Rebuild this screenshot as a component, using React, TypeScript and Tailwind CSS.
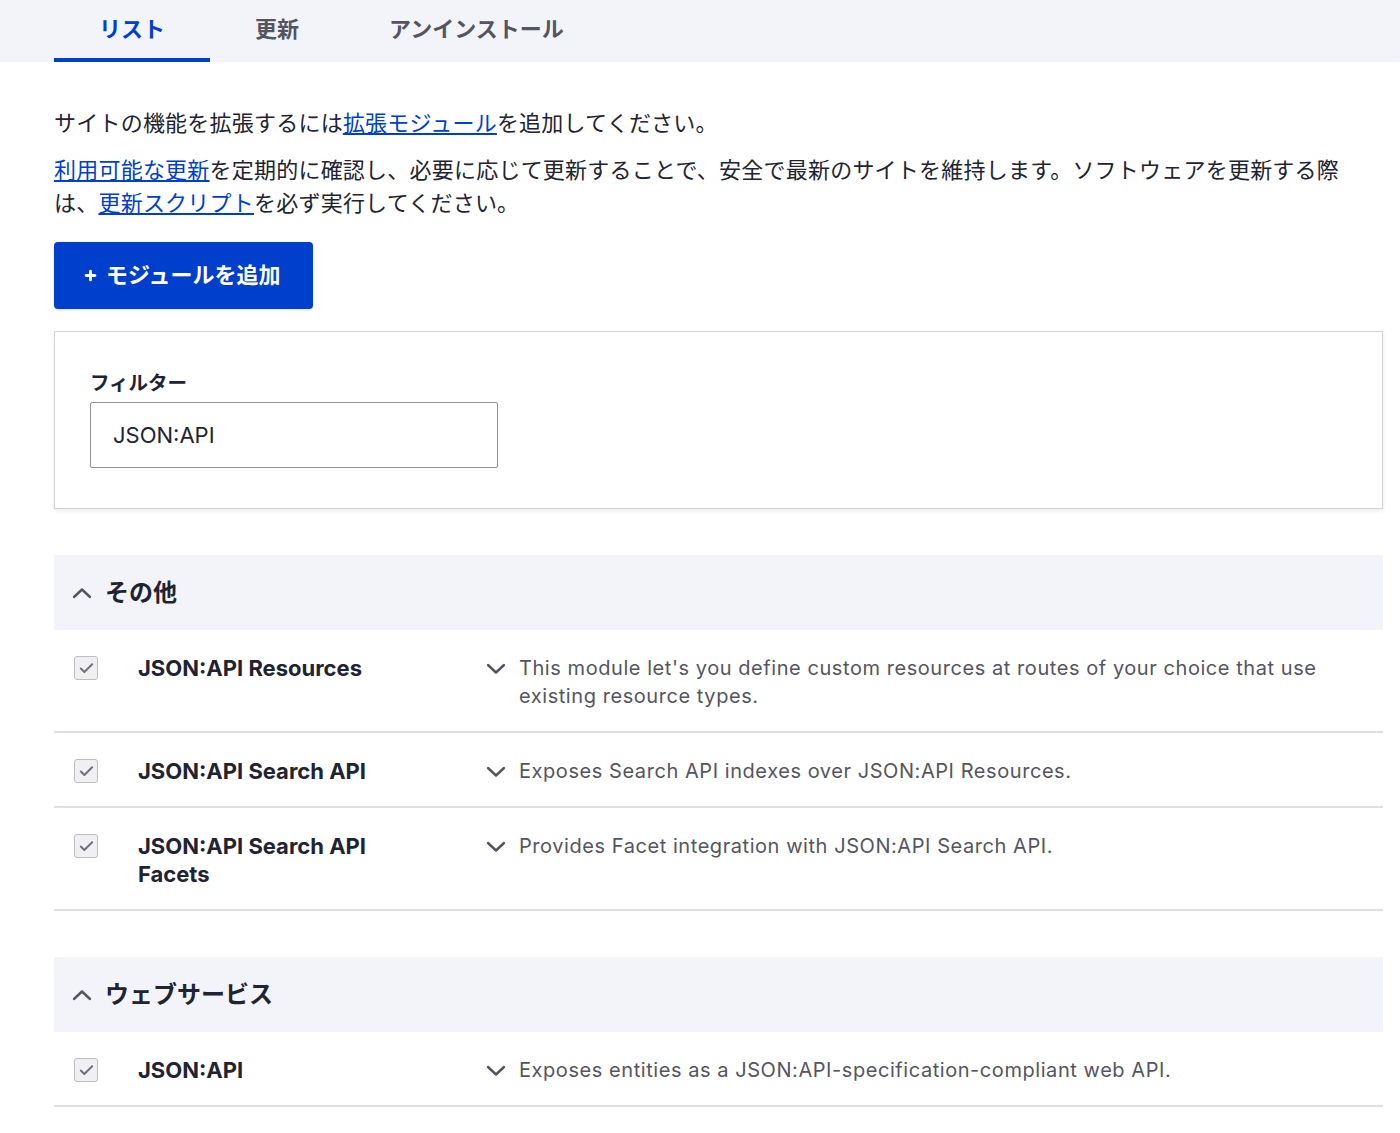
import { Check, Plus } from 'lucide-react';

const font = "font-['Inter','Noto_Sans_CJK_JP',sans-serif]";

type Mod = { name: string; desc: string };

const groups: { title: string; mods: Mod[] }[] = [
  {
    title: 'その他',
    mods: [
      {
        name: 'JSON:API Resources',
        desc: "This module let's you define custom resources at routes of your choice that use existing resource types.",
      },
      { name: 'JSON:API Search API', desc: 'Exposes Search API indexes over JSON:API Resources.' },
      { name: 'JSON:API Search API Facets', desc: 'Provides Facet integration with JSON:API Search API.' },
    ],
  },
  {
    title: 'ウェブサービス',
    mods: [{ name: 'JSON:API', desc: 'Exposes entities as a JSON:API-specification-compliant web API.' }],
  },
];

// thin wide chevron, like Claro's details marker
const Chevron = ({ up = false }: { up?: boolean }) => (
  <svg width="20" height="12" viewBox="0 0 20 12" className="shrink-0" aria-hidden>
    <polyline
      points={up ? '2,10 10,2.5 18,10' : '2,2 10,9.5 18,2'}
      fill="none"
      stroke="#545560"
      strokeWidth="2.4"
      strokeLinecap="round"
      strokeLinejoin="round"
    />
  </svg>
);

const Tabs = () => (
  <div className="bg-[#f3f4f9] h-[62px] pl-[54px] flex items-stretch">
    <div className="px-[45px] flex items-center border-b-4 border-[#003ecc] text-[#003ecc] font-bold text-[22px]">
      リスト
    </div>
    <div className="px-[45px] flex items-center border-b-4 border-transparent text-[#545560] font-bold text-[22px]">
      更新
    </div>
    <div className="px-[45px] flex items-center border-b-4 border-transparent text-[#545560] font-bold text-[22px]">
      アンインストール
    </div>
  </div>
);

const ModuleRow = ({ mod }: { mod: Mod }) => (
  <div className="flex items-start border-b-2 border-[#dedfe4] pt-[24px] pb-[21px]">
    <div className="w-[84px] pl-[20px] pt-[2px] shrink-0">
      <span className="flex items-center justify-center w-[24px] h-[24px] rounded-[3px] border-[1.5px] border-[#bdbec4] bg-[#f0f0f3]">
        <Check size={17} strokeWidth={2.8} className="text-[#717278]" />
      </span>
    </div>
    <div className="w-[348px] shrink-0 pr-[58px] font-bold text-[22px] leading-[28px] text-[#222330]">{mod.name}</div>
    <div className="flex-1 flex items-start gap-[13px] pr-[40px]">
      <span className="mt-[9px]">
        <Chevron />
      </span>
      <p className="text-[20px] tracking-[0.028em] leading-[28px] text-[#545560]">{mod.desc}</p>
    </div>
  </div>
);

const Group = ({ title, mods }: { title: string; mods: Mod[] }) => (
  <section className="mt-[46px]">
    <div className="bg-[#f3f4f9] h-[75px] flex items-center pl-[18px] gap-[13px]">
      <Chevron up />
      <h2 className="font-bold text-[24px] text-[#222330]">{title}</h2>
    </div>
    {mods.map((m) => (
      <ModuleRow key={m.name} mod={m} />
    ))}
  </section>
);

export default function App() {
  return (
    <div className={`${font} bg-white min-h-screen text-[#222330]`}>
      <Tabs />
      <main className="pl-[54px] pr-[17px] pt-[45px] pb-[40px]">
        <p className="text-[22px] leading-[33px] tracking-[0.01em]">
          サイトの機能を拡張するには
          <a href="#" className="text-[#003ecc] underline">拡張モジュール</a>
          を追加してください。
        </p>
        <p className="text-[22px] leading-[33px] tracking-[0.01em] mt-[14px] max-w-[1300px]">
          <a href="#" className="text-[#003ecc] underline">利用可能な更新</a>
          を定期的に確認し、必要に応じて更新することで、安全で最新のサイトを維持します。ソフトウェアを更新する際は、
          <a href="#" className="text-[#003ecc] underline">更新スクリプト</a>
          を必ず実行してください。
        </p>
        <button className="mt-[22px] h-[67px] w-[259px] bg-[#003ecc] rounded-[4px] shadow-sm text-white font-bold text-[22px] flex items-center pl-[29px] gap-[8px]">
          <Plus size={15} strokeWidth={4.5} />
          モジュールを追加
        </button>
        <div className="mt-[22px] border border-[#d4d4d8] shadow-[0_2px_4px_rgba(0,0,0,0.08)] h-[178px] pt-[36px] pl-[35px]">
          <label className="block font-bold text-[19.5px] leading-[30px] text-[#222330]">フィルター</label>
          <input
            readOnly
            value="JSON:API"
            className="mt-[4px] w-[408px] h-[66px] border border-[#8e929c] rounded-[2px] px-[22px] text-[22px] text-[#222330] outline-none"
          />
        </div>
        {groups.map((g) => (
          <Group key={g.title} title={g.title} mods={g.mods} />
        ))}
      </main>
    </div>
  );
}
